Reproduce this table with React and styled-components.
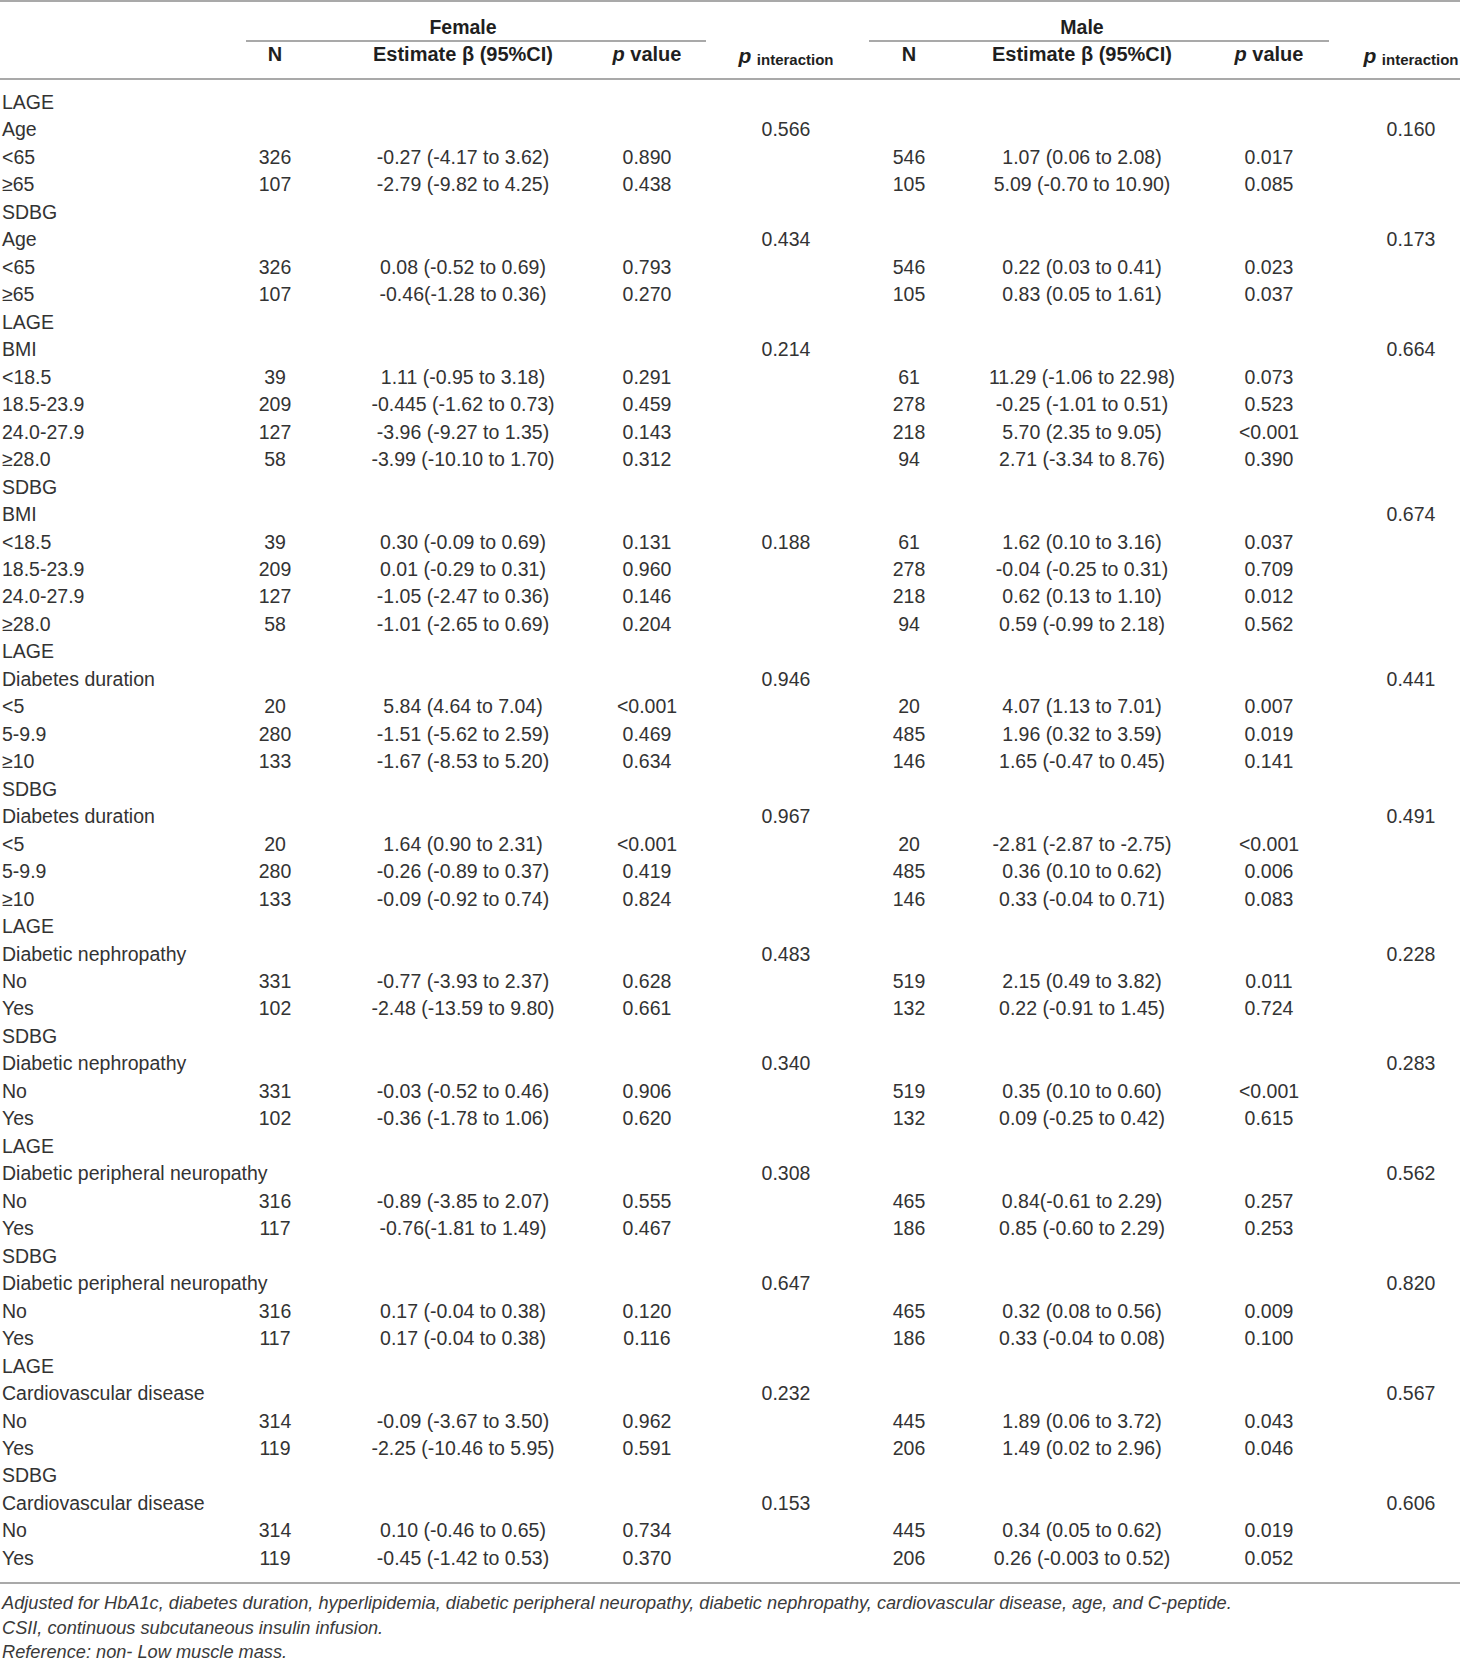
import React from "react";
import styled, { createGlobalStyle } from "styled-components";

const GlobalStyle = createGlobalStyle`
  html, body {
    margin: 0;
    padding: 0;
    background: #fff;
  }
  body {
    font-family: "Liberation Sans", Arial, sans-serif;
    color: #333;
  }
`;

// label | N | estimate | p | p int | N | estimate | p | p int
const COLUMNS = "232px 86px 290px 78px 200px 46px 300px 74px 154px";

const rows = [
  ["LAGE"],
  ["Age", "", "", "", "0.566", "", "", "", "0.160"],
  ["<65", "326", "-0.27 (-4.17 to 3.62)", "0.890", "", "546", "1.07 (0.06 to 2.08)", "0.017"],
  ["≥65", "107", "-2.79 (-9.82 to 4.25)", "0.438", "", "105", "5.09 (-0.70 to 10.90)", "0.085"],
  ["SDBG"],
  ["Age", "", "", "", "0.434", "", "", "", "0.173"],
  ["<65", "326", "0.08 (-0.52 to 0.69)", "0.793", "", "546", "0.22 (0.03 to 0.41)", "0.023"],
  ["≥65", "107", "-0.46(-1.28 to 0.36)", "0.270", "", "105", "0.83 (0.05 to 1.61)", "0.037"],
  ["LAGE"],
  ["BMI", "", "", "", "0.214", "", "", "", "0.664"],
  ["<18.5", "39", "1.11 (-0.95 to 3.18)", "0.291", "", "61", "11.29 (-1.06 to 22.98)", "0.073"],
  ["18.5-23.9", "209", "-0.445 (-1.62 to 0.73)", "0.459", "", "278", "-0.25 (-1.01 to 0.51)", "0.523"],
  ["24.0-27.9", "127", "-3.96 (-9.27 to 1.35)", "0.143", "", "218", "5.70 (2.35 to 9.05)", "<0.001"],
  ["≥28.0", "58", "-3.99 (-10.10 to 1.70)", "0.312", "", "94", "2.71 (-3.34 to 8.76)", "0.390"],
  ["SDBG"],
  ["BMI", "", "", "", "", "", "", "", "0.674"],
  ["<18.5", "39", "0.30 (-0.09 to 0.69)", "0.131", "0.188", "61", "1.62 (0.10 to 3.16)", "0.037"],
  ["18.5-23.9", "209", "0.01 (-0.29 to 0.31)", "0.960", "", "278", "-0.04 (-0.25 to 0.31)", "0.709"],
  ["24.0-27.9", "127", "-1.05 (-2.47 to 0.36)", "0.146", "", "218", "0.62 (0.13 to 1.10)", "0.012"],
  ["≥28.0", "58", "-1.01 (-2.65 to 0.69)", "0.204", "", "94", "0.59 (-0.99 to 2.18)", "0.562"],
  ["LAGE"],
  ["Diabetes duration", "", "", "", "0.946", "", "", "", "0.441"],
  ["<5", "20", "5.84 (4.64 to 7.04)", "<0.001", "", "20", "4.07 (1.13 to 7.01)", "0.007"],
  ["5-9.9", "280", "-1.51 (-5.62 to 2.59)", "0.469", "", "485", "1.96 (0.32 to 3.59)", "0.019"],
  ["≥10", "133", "-1.67 (-8.53 to 5.20)", "0.634", "", "146", "1.65 (-0.47 to 0.45)", "0.141"],
  ["SDBG"],
  ["Diabetes duration", "", "", "", "0.967", "", "", "", "0.491"],
  ["<5", "20", "1.64 (0.90 to 2.31)", "<0.001", "", "20", "-2.81 (-2.87 to -2.75)", "<0.001"],
  ["5-9.9", "280", "-0.26 (-0.89 to 0.37)", "0.419", "", "485", "0.36 (0.10 to 0.62)", "0.006"],
  ["≥10", "133", "-0.09 (-0.92 to 0.74)", "0.824", "", "146", "0.33 (-0.04 to 0.71)", "0.083"],
  ["LAGE"],
  ["Diabetic nephropathy", "", "", "", "0.483", "", "", "", "0.228"],
  ["No", "331", "-0.77 (-3.93 to 2.37)", "0.628", "", "519", "2.15 (0.49 to 3.82)", "0.011"],
  ["Yes", "102", "-2.48 (-13.59 to 9.80)", "0.661", "", "132", "0.22 (-0.91 to 1.45)", "0.724"],
  ["SDBG"],
  ["Diabetic nephropathy", "", "", "", "0.340", "", "", "", "0.283"],
  ["No", "331", "-0.03 (-0.52 to 0.46)", "0.906", "", "519", "0.35 (0.10 to 0.60)", "<0.001"],
  ["Yes", "102", "-0.36 (-1.78 to 1.06)", "0.620", "", "132", "0.09 (-0.25 to 0.42)", "0.615"],
  ["LAGE"],
  ["Diabetic peripheral neuropathy", "", "", "", "0.308", "", "", "", "0.562"],
  ["No", "316", "-0.89 (-3.85 to 2.07)", "0.555", "", "465", "0.84(-0.61 to 2.29)", "0.257"],
  ["Yes", "117", "-0.76(-1.81 to 1.49)", "0.467", "", "186", "0.85 (-0.60 to 2.29)", "0.253"],
  ["SDBG"],
  ["Diabetic peripheral neuropathy", "", "", "", "0.647", "", "", "", "0.820"],
  ["No", "316", "0.17 (-0.04 to 0.38)", "0.120", "", "465", "0.32 (0.08 to 0.56)", "0.009"],
  ["Yes", "117", "0.17 (-0.04 to 0.38)", "0.116", "", "186", "0.33 (-0.04 to 0.08)", "0.100"],
  ["LAGE"],
  ["Cardiovascular disease", "", "", "", "0.232", "", "", "", "0.567"],
  ["No", "314", "-0.09 (-3.67 to 3.50)", "0.962", "", "445", "1.89 (0.06 to 3.72)", "0.043"],
  ["Yes", "119", "-2.25 (-10.46 to 5.95)", "0.591", "", "206", "1.49 (0.02 to 2.96)", "0.046"],
  ["SDBG"],
  ["Cardiovascular disease", "", "", "", "0.153", "", "", "", "0.606"],
  ["No", "314", "0.10 (-0.46 to 0.65)", "0.734", "", "445", "0.34 (0.05 to 0.62)", "0.019"],
  ["Yes", "119", "-0.45 (-1.42 to 0.53)", "0.370", "", "206", "0.26 (-0.003 to 0.52)", "0.052"],
];

const notes = [
  "Adjusted for HbA1c, diabetes duration, hyperlipidemia, diabetic peripheral neuropathy, diabetic nephropathy, cardiovascular disease, age, and C-peptide.",
  "CSII, continuous subcutaneous insulin infusion.",
  "Reference: non- Low muscle mass.",
];

const App = () => {
  return (
    <React.Fragment>
      <GlobalStyle />
      <Page>
        <Header>
          <GroupTitle $col={3}>Female</GroupTitle>
          <GroupTitle $col={7}>Male</GroupTitle>
          <GroupLine $from={2} $to={5} $left={14} $right={-20} />
          <GroupLine $from={6} $to={9} $left={-17} $right={-23} />
          <HeadCell $col={2}>N</HeadCell>
          <HeadCell $col={3}>Estimate β (95%CI)</HeadCell>
          <HeadCell $col={4}><i>p</i> value</HeadCell>
          <InteractionHead $col={5}><BigP>p</BigP> <Sub>interaction</Sub></InteractionHead>
          <HeadCell $col={6}>N</HeadCell>
          <HeadCell $col={7}>Estimate β (95%CI)</HeadCell>
          <HeadCell $col={8}><i>p</i> value</HeadCell>
          <InteractionHead $col={9} $last><BigP>p</BigP> <Sub>interaction</Sub></InteractionHead>
        </Header>

        <Body>
          {rows.map((row, i) => (
            <Row key={i}>
              <Label>{row[0]}</Label>
              {Array.from({ length: 8 }).map((_, j) => (
                <Cell key={j} $last={j === 7}>{row[j + 1] || ""}</Cell>
              ))}
            </Row>
          ))}
        </Body>

        <Notes>
          {notes.map((n) => (
            <Note key={n}>{n}</Note>
          ))}
        </Notes>
      </Page>
    </React.Fragment>
  );
};

const Page = styled.div`
  width: 1460px;
  height: 1661px;
  overflow: hidden;
  font-size: 19.5px;
`;

const Header = styled.div`
  display: grid;
  grid-template-columns: ${COLUMNS};
  grid-template-rows: 38px 2px 36px;
  border-top: 2px solid #a9a9a9;
  border-bottom: 2px solid #a9a9a9;
  font-weight: bold;
  color: #1f1f1f;
`;

const GroupTitle = styled.div`
  grid-row: 1;
  grid-column: ${(p) => p.$col};
  text-align: center;
  white-space: nowrap;
  padding-top: 13px;
  line-height: 25px;
`;

const GroupLine = styled.div`
  grid-row: 2;
  grid-column: ${(p) => p.$from} / ${(p) => p.$to};
  margin-left: ${(p) => p.$left}px;
  margin-right: ${(p) => p.$right}px;
  background: #a9a9a9;
`;

const HeadCell = styled.div`
  grid-row: 3;
  grid-column: ${(p) => p.$col};
  text-align: center;
  white-space: nowrap;
  line-height: 24px;
  font-size: 20px;
`;

const InteractionHead = styled(HeadCell)`
  grid-row: 2 / 4;
  align-self: end;
  padding-bottom: 8px;
  padding-left: ${(p) => (p.$last ? "56px" : "0")};
  line-height: 24px;
`;

const BigP = styled.i`
  font-size: 21px;
`;

const Sub = styled.span`
  font-size: 15px;
  position: relative;
  top: 2px;
`;

const Body = styled.div`
  padding: 9px 0 10px;
  border-bottom: 2px solid #a9a9a9;
`;

const Row = styled.div`
  display: grid;
  grid-template-columns: ${COLUMNS};
  line-height: 27.47px;
  height: 27.47px;
  white-space: nowrap;
`;

const Label = styled.div`
  padding-left: 2px;
  overflow: visible;
`;

const Cell = styled.div`
  text-align: center;
  padding-left: ${(p) => (p.$last ? "56px" : "0")};
`;

const Notes = styled.div`
  padding-top: 7px;
  font-size: 18.2px;
  font-style: italic;
  color: #3a3a3a;
`;

const Note = styled.div`
  line-height: 24.5px;
  padding-left: 2px;
  white-space: nowrap;
`;

export default App;
